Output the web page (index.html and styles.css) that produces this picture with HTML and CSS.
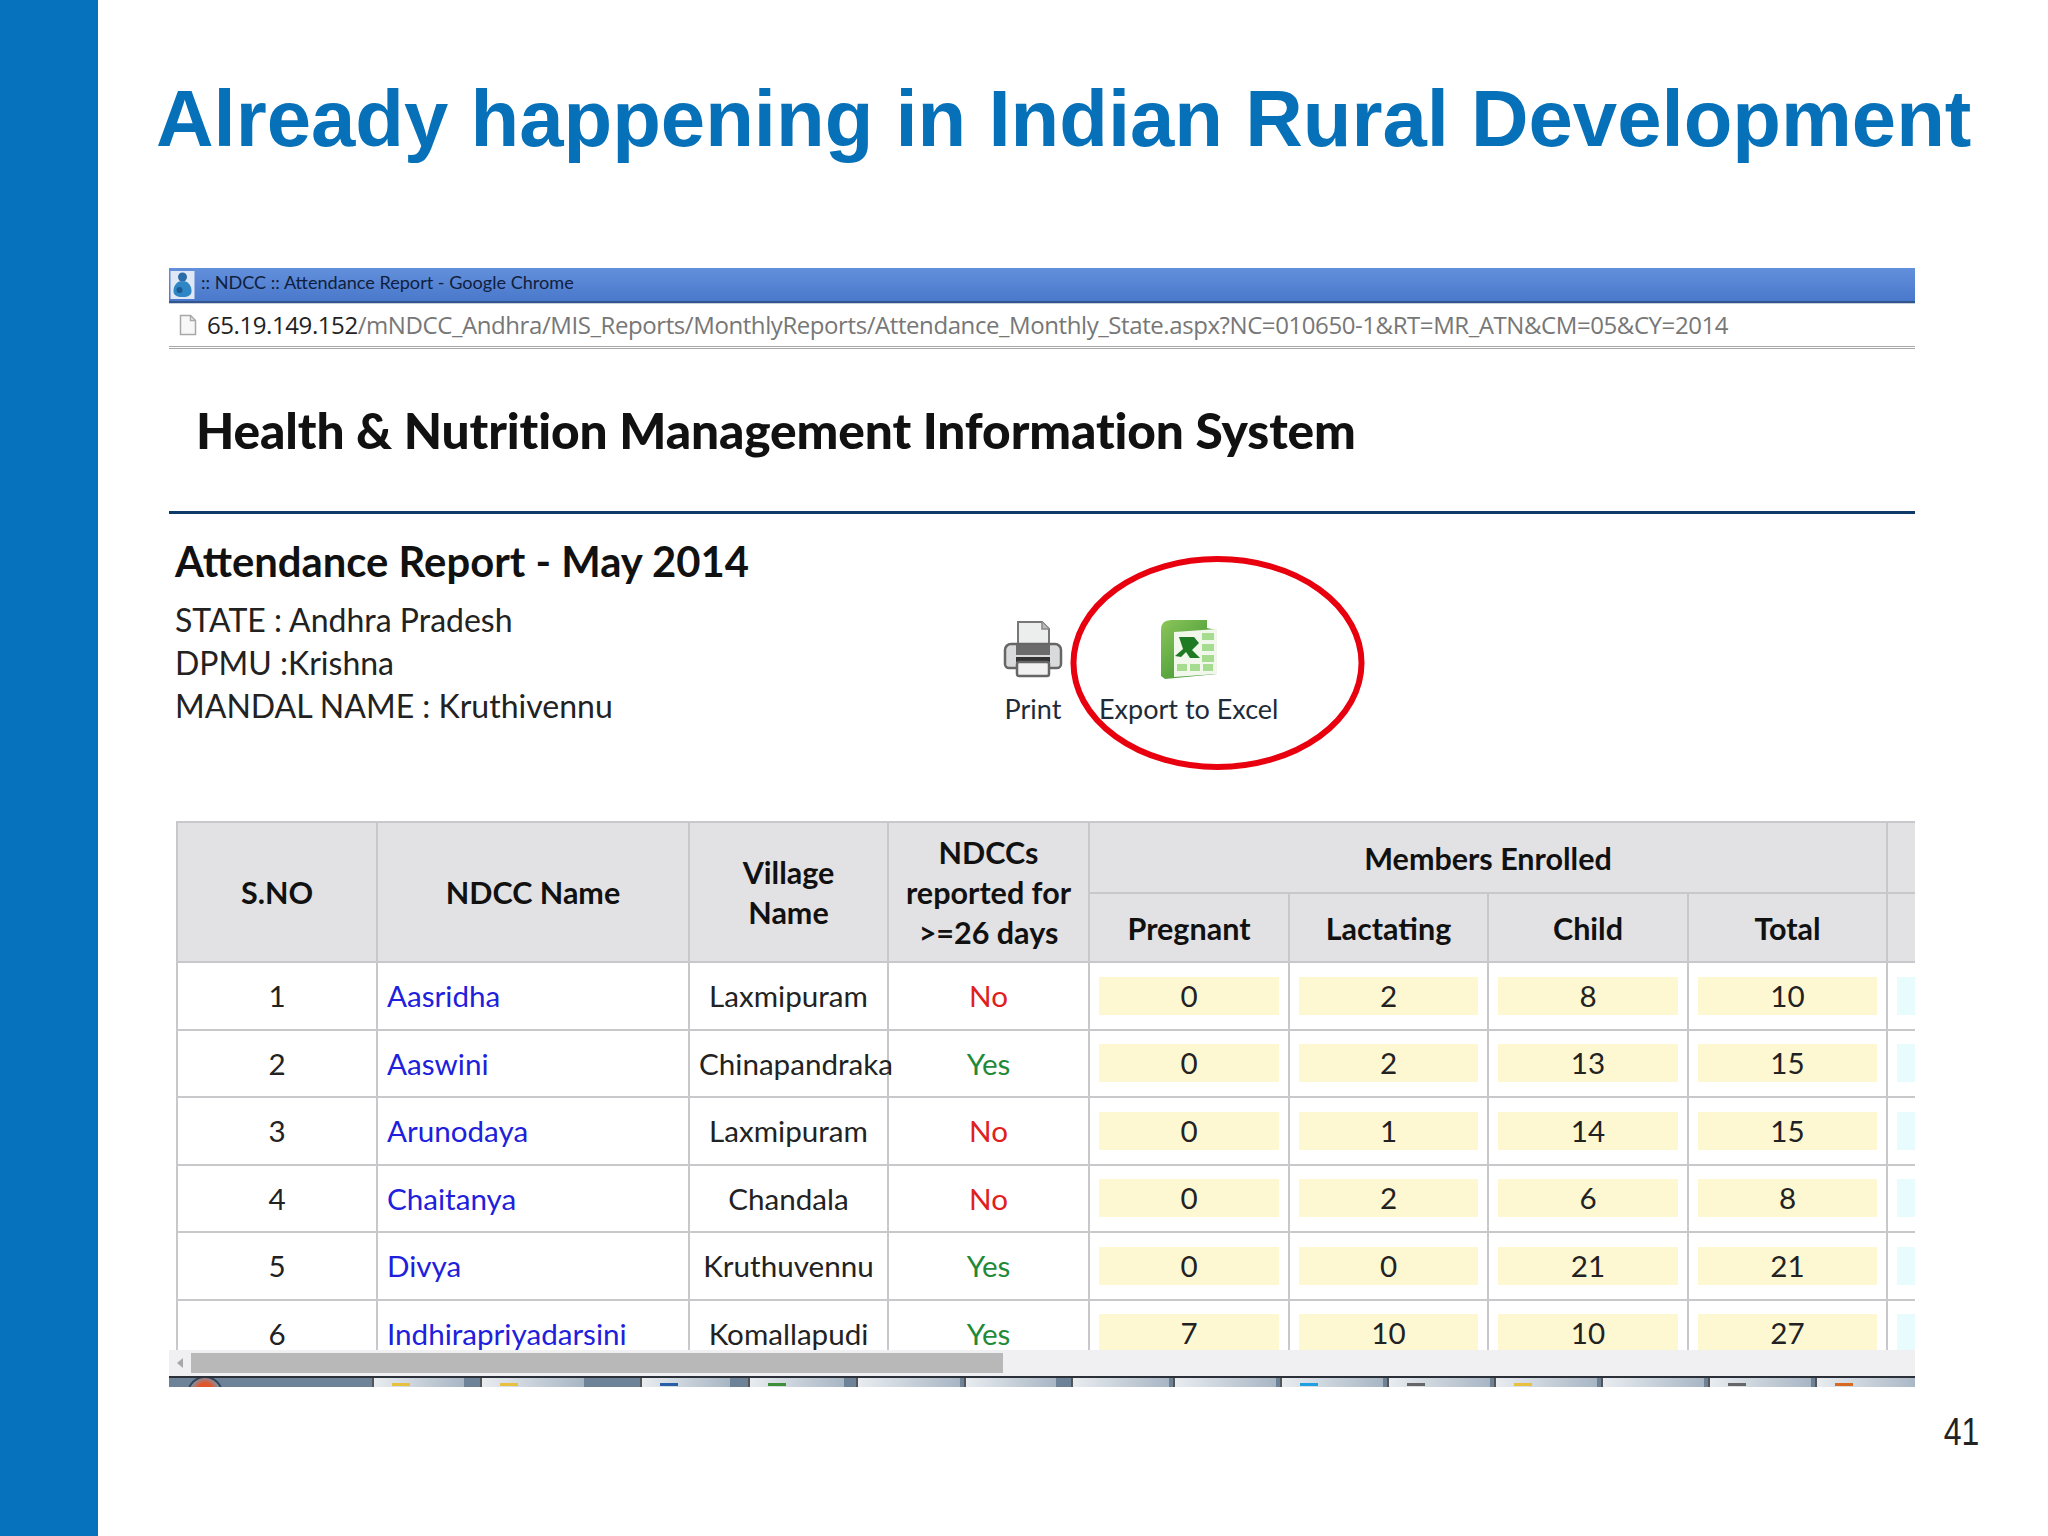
FILE: index.html
```html
<!DOCTYPE html>
<html lang="en">
<head>
<meta charset="utf-8">
<title>Already happening in Indian Rural Development</title>
<link rel="stylesheet" href="styles.css">
</head>
<body>
<div class="slide">
  <aside class="rail"></aside>
  <main class="content">
    <h1 class="slide-title">Already happening in Indian Rural Development</h1>
    <section class="shot">
      <div class="titlebar">
        <svg class="favicon" viewBox="0 0 24 28"><rect width="24" height="28" fill="#dfe8f4"/><circle cx="12" cy="6" r="4.5" fill="#2a6ca8"/><path d="M12 10c-6 0-9 5-9 10 0 4 3 6 9 6s9-2 9-6c0-5-3-10-9-10z" fill="#2f86c4"/><circle cx="9" cy="19" r="3" fill="#1b5a92"/></svg>
        <span class="wintitle">:: NDCC :: Attendance Report - Google Chrome</span>
      </div>
      <div class="addr">
        <svg class="pageicon" viewBox="0 0 18 22"><path d="M1.5 1.5h10l5 5v14h-15z" fill="#f7f7f7" stroke="#a8a8a8" stroke-width="1.5"/><path d="M11.5 1.5v5h5" fill="none" stroke="#a8a8a8" stroke-width="1.5"/></svg>
        <span class="host">65.19.149.152</span><span class="path">/mNDCC_Andhra/MIS_Reports/MonthlyReports/Attendance_Monthly_State.aspx?NC=010650-1&amp;RT=MR_ATN&amp;CM=05&amp;CY=2014</span>
      </div>
      <div class="sys-head"><h2>Health &amp; Nutrition Management Information System</h2></div>
      <div class="report">
        <div class="report-info">
          <h3>Attendance Report - May 2014</h3>
          <p>STATE : Andhra Pradesh</p>
          <p>DPMU :Krishna</p>
          <p>MANDAL NAME : Kruthivennu</p>
        </div>
        <div class="tools">
          <div class="tool">
            <svg class="tool-icon" viewBox="0 0 60 62">
              <path d="M15 4h24l7 7v18H15z" fill="#eceded" stroke="#777" stroke-width="2"/>
              <path d="M39 4v7h7" fill="#bbb" stroke="#888" stroke-width="1.5"/>
              <path d="M8 26h44a6 6 0 0 1 6 6v14a4 4 0 0 1-4 4H6a4 4 0 0 1-4-4V32a6 6 0 0 1 6-6z" fill="#d9dadb" stroke="#666" stroke-width="2.5"/>
              <rect x="13" y="27" width="34" height="10" fill="#6b6b6b"/>
              <rect x="13" y="39" width="34" height="5" fill="#333"/>
              <rect x="14" y="44" width="32" height="14" rx="2" fill="#f1f1f1" stroke="#666" stroke-width="2.5"/>
            </svg>
            <span>Print</span>
          </div>
          <div class="tool">
            <svg class="tool-icon" viewBox="0 0 60 62">
              <defs><linearGradient id="xg" x1="0" x2="1" y1="0" y2="1"><stop offset="0" stop-color="#8cc65a"/><stop offset="1" stop-color="#2f8a2a"/></linearGradient></defs>
              <path d="M2 12Q2 2 12 2h36v8l10 2v44L6 61 2 58z" fill="url(#xg)"/>
              <path d="M15 14l43-3v45l-43 3z" fill="#f2f7ec"/>
              <path d="M20 19l15 0 5 6-7 7 8 8H31l-4-6-5 5-6-1 8-7z" fill="#1f7a24"/>
              <rect x="43" y="15" width="12" height="7" fill="#a6dc90"/><rect x="43" y="26" width="12" height="7" fill="#a6dc90"/><rect x="43" y="37" width="12" height="7" fill="#a6dc90"/>
              <rect x="18" y="46" width="10" height="7" fill="#a6dc90"/><rect x="31" y="46" width="10" height="7" fill="#a6dc90"/><rect x="44" y="46" width="10" height="7" fill="#a6dc90"/>
            </svg>
            <span>Export to Excel</span>
          </div>
        </div>
        <svg class="ring" viewBox="0 0 295 214"><ellipse cx="147.500" cy="107" rx="144" ry="104" fill="none" stroke="#e8000f" stroke-width="6"/></svg>
      </div>
      <div class="table-clip">
        <table class="grid">
          <colgroup><col class="c1"><col class="c2"><col class="c3"><col class="c4"><col class="c5"><col class="c6"><col class="c7"><col class="c8"><col class="c9"></colgroup>
          <thead>
            <tr class="h1">
              <th rowspan="2">S.NO</th><th rowspan="2">NDCC Name</th><th rowspan="2">Village<br>Name</th><th rowspan="2">NDCCs<br>reported for<br>&gt;=26 days</th>
              <th colspan="4">Members Enrolled</th><th></th>
            </tr>
            <tr class="h2"><th>Pregnant</th><th>Lactating</th><th>Child</th><th>Total</th><th></th></tr>
          </thead>
          <tbody>
            <tr><td>1</td><td class="name"><a>Aasridha</a></td><td>Laxmipuram</td><td class="no">No</td><td><div class="val">0</div></td><td><div class="val">2</div></td><td><div class="val">8</div></td><td><div class="val">10</div></td><td><div class="cy"></div></td></tr>
            <tr><td>2</td><td class="name"><a>Aaswini</a></td><td>Chinapandraka</td><td class="yes">Yes</td><td><div class="val">0</div></td><td><div class="val">2</div></td><td><div class="val">13</div></td><td><div class="val">15</div></td><td><div class="cy"></div></td></tr>
            <tr><td>3</td><td class="name"><a>Arunodaya</a></td><td>Laxmipuram</td><td class="no">No</td><td><div class="val">0</div></td><td><div class="val">1</div></td><td><div class="val">14</div></td><td><div class="val">15</div></td><td><div class="cy"></div></td></tr>
            <tr><td>4</td><td class="name"><a>Chaitanya</a></td><td>Chandala</td><td class="no">No</td><td><div class="val">0</div></td><td><div class="val">2</div></td><td><div class="val">6</div></td><td><div class="val">8</div></td><td><div class="cy"></div></td></tr>
            <tr><td>5</td><td class="name"><a>Divya</a></td><td>Kruthuvennu</td><td class="yes">Yes</td><td><div class="val">0</div></td><td><div class="val">0</div></td><td><div class="val">21</div></td><td><div class="val">21</div></td><td><div class="cy"></div></td></tr>
            <tr><td>6</td><td class="name"><a>Indhirapriyadarsini</a></td><td>Komallapudi</td><td class="yes">Yes</td><td><div class="val">7</div></td><td><div class="val">10</div></td><td><div class="val">10</div></td><td><div class="val">27</div></td><td><div class="cy"></div></td></tr>
          </tbody>
        </table>
      </div>
      <div class="scrollbar"><span class="arrow"></span><span class="thumb"></span></div>
      <div class="taskbar">
        <div class="start"><span class="orb"></span></div>
        <span class="tb w1"><i class="y"></i></span><span class="tb w2"><i class="y"></i></span><span class="tb w3 mid"><i class="b"></i></span><span class="tb w4"><i class="g"></i></span><span class="tb w5"></span><span class="tb w6"></span><span class="tb w7"></span>
        <span class="tb"></span><span class="tb"><i class="c"></i></span><span class="tb"><i class="k"></i></span><span class="tb"><i class="y"></i></span><span class="tb"></span><span class="tb"><i class="k"></i></span><span class="tb"><i class="o"></i></span><span class="tb"></span>
      </div>
    </section>
    <footer class="page-no"><span>41</span></footer>
  </main>
</div>
</body>
</html>
```

FILE: styles.css
```css
* { box-sizing: border-box; }
html, body { margin: 0; padding: 0; background: #fff; }
.slide { width: 2048px; height: 1536px; display: flex; overflow: hidden; background: #fff; font-family: Lato, "Open Sans", sans-serif; color: #1a1a1a; }
.rail { width: 98px; flex: none; background: #0672bd; }
.content { flex: 1; min-width: 0; display: flex; flex-direction: column; }

.slide-title { margin: 0; height: 268px; padding: 72px 0 0 58px; font: bold 79.7px/94px "Liberation Sans", Arial, sans-serif; color: #0671b8; white-space: nowrap; }

.shot { margin-left: 71px; width: 1746px; flex: none; }

.titlebar { height: 35px; display: flex; align-items: center; gap: 6px; background: linear-gradient(#6390dc, #4a78cb); border-bottom: 2px solid #30558f; font-size: 18.1px; color: #10203c; padding-left: 1px; }
.wintitle { margin-top: -5px; }
.favicon { width: 25px; height: 28px; }

.addr { height: 46px; display: flex; align-items: center; font: 24px/1 "Open Sans", sans-serif; letter-spacing: -0.42px; border-top: 1px solid #c8d0da; border-bottom: 3px double #a8a8a8; padding-left: 10px; white-space: nowrap; }
.pageicon { width: 18px; height: 22px; margin-right: 10px; }
.host { color: #222; }
.path { color: #777; }

.sys-head { height: 165px; display: flex; align-items: center; padding-left: 27px; border-bottom: 3px solid #0d3a66; }
.sys-head h2 { margin: 0; font-size: 49.6px; font-weight: 900; letter-spacing: -0.1px; color: #111; white-space: nowrap; }

.report { position: relative; height: 307px; display: flex; }
.report-info { width: 834px; flex: none; padding: 22px 0 0 6px; }
.report-info h3 { margin: 0 0 12px; font-size: 41.8px; line-height: 50px; font-weight: 700; color: #111; }
.report-info p { margin: 0; font-size: 32px; line-height: 43px; color: #222; }
.tools { display: flex; gap: 36px; padding-top: 104px; }
.tool { display: flex; flex-direction: column; align-items: center; font-size: 27px; line-height: 36px; color: #1d2b3a; white-space: nowrap; }
.tool-icon { width: 60px; height: 62px; margin-bottom: 11px; }
.ring { position: absolute; left: 901px; top: 42px; width: 295px; height: 214px; }

.table-clip { height: 529px; overflow: hidden; padding-left: 7px; }
.grid { border-collapse: collapse; table-layout: fixed; width: 1910px; font-size: 29.6px; }
.c1 { width: 200px; } .c2 { width: 312px; } .c3 { width: 199px; } .c4 { width: 201px; } .c5 { width: 200px; } .c6 { width: 199px; } .c7 { width: 200px; } .c8 { width: 199px; } .c9 { width: 200px; }
.grid th, .grid td { border: 2px solid #c8c8ca; padding: 0 9px; text-align: center; white-space: nowrap; }
.grid th { background: #e2e1e3; font-weight: 700; color: #111; line-height: 40px; font-size: 30.5px; }
.h1 th { height: 71px; }
.h2 th { height: 69px; }
.grid td { height: 67.500px; color: #222; }
.grid td.name { text-align: left; }
.name a { color: #2020dc; }
.grid td.no { color: #e02020; }
.grid td.yes { color: #1f8a3a; }
.val { height: 38px; line-height: 38px; background: #fdf8d2; }
.cy { height: 38px; background: #e8fbfd; }

.scrollbar { height: 26px; background: #f0eff1; display: flex; align-items: center; padding-left: 8px; }
.arrow { width: 0; height: 0; border: 5px solid transparent; border-right: 6px solid #a8a8a8; border-left: 0; margin-right: 8px; }
.thumb { width: 812px; height: 20px; background: #b8b8b8; }

.taskbar { height: 11px; display: flex; gap: 4px; overflow: hidden; background: #6f8398; border-top: 2px solid #2c3038; }
.start { width: 199px; flex: none; position: relative; }
.orb { position: absolute; left: 18px; top: -2px; width: 36px; height: 36px; border-radius: 50%; background: radial-gradient(circle at 50% 40%, #e0562a 0 30%, #7a9ab4 60%); border: 2px solid #33475c; }
.tb { width: 103px; flex: none; padding-left: 18px; background: linear-gradient(90deg, #e8ecf0, #a8b6c4); border-left: 2px solid #555; }
.tb.w1 { width: 92px; } .tb.w2 { width: 104px; margin-left: 12px; } .tb.w3 { width: 90px; margin-left: 52px; } .tb.w4 { width: 96px; margin-left: 14px; } .tb.w5 { width: 104px; margin-left: 8px; } .tb.w6 { width: 92px; } .tb.w7 { width: 98px; margin-left: 11px; }
.tb i { display: block; width: 18px; height: 3px; margin-top: 5px; }
.tb .y { background: #e8c040; } .tb .b { background: #2a5fa8; } .tb .g { background: #3f8f3a; } .tb .c { background: #20a0e0; } .tb .k { background: #666; } .tb .o { background: #d86a20; }

.page-no { margin-top: 22px; padding-right: 69px; text-align: right; font: 39px/46px "Liberation Sans", sans-serif; color: #222; }
.page-no span { display: inline-block; transform: scaleX(0.82); transform-origin: right center; }
```
